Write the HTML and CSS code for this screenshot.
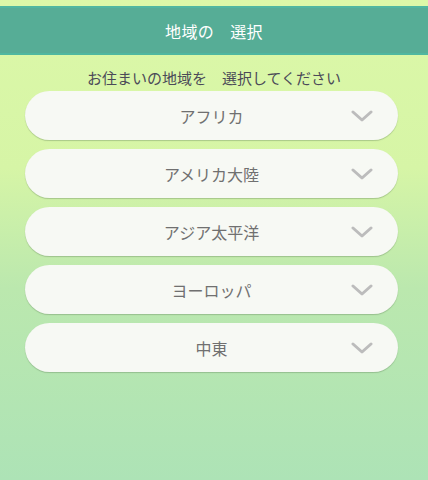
FILE: index.html
```html
<!DOCTYPE html>
<html lang="ja">
<head>
<meta charset="utf-8">
<title>地域の選択</title>
<link rel="stylesheet" href="styles.css">
</head>
<body>
<div class="page">
  <header class="header">地域の　選択</header>
  <p class="subtitle">お住まいの地域を　選択してください</p>
  <ul class="list">
    <li class="item"><span class="label">アフリカ</span><svg class="chev" viewBox="0 0 22 12"><path d="M2 2 L11 10 L20 2"/></svg></li>
    <li class="item"><span class="label">アメリカ大陸</span><svg class="chev" viewBox="0 0 22 12"><path d="M2 2 L11 10 L20 2"/></svg></li>
    <li class="item"><span class="label">アジア太平洋</span><svg class="chev" viewBox="0 0 22 12"><path d="M2 2 L11 10 L20 2"/></svg></li>
    <li class="item"><span class="label">ヨーロッパ</span><svg class="chev" viewBox="0 0 22 12"><path d="M2 2 L11 10 L20 2"/></svg></li>
    <li class="item"><span class="label">中東</span><svg class="chev" viewBox="0 0 22 12"><path d="M2 2 L11 10 L20 2"/></svg></li>
  </ul>
</div>
</body>
</html>
```

FILE: styles.css
```css
html, body {
  margin: 0;
  padding: 0;
}
body {
  width: 428px;
  height: 480px;
  overflow: hidden;
  font-family: "Noto Sans CJK JP", "Noto Sans", sans-serif;
  background: linear-gradient(180deg, #dcf8a8 0%, #d6f5a6 35%, #bbe8ae 60%, #ade3b6 100%);
}
.page {
  display: flex;
  flex-direction: column;
  padding-top: 6px;
}
.header {
  height: 45px;
  border-top: 2px solid #4fb7a0;
  border-bottom: 2px solid #4fb7a0;
  background: #56ad96;
  color: #ffffff;
  font-size: 16px;
  display: flex;
  align-items: center;
  justify-content: center;
  letter-spacing: 0.3px;
}
.subtitle {
  margin: 14px 0 0;
  height: 22px;
  line-height: 18px;
  text-align: center;
  font-size: 15px;
  color: #4b4a58;
}
.list {
  list-style: none;
  margin: 0;
  padding: 0 30px 0 25px;
  display: flex;
  flex-direction: column;
  gap: 9px;
}
.item {
  height: 49px;
  border-radius: 25px;
  background: #f7f9f4;
  box-shadow: 0 1px 1px rgba(90, 120, 80, 0.35);
  display: grid;
  grid-template-columns: 1fr auto 1fr;
  align-items: center;
}
.label {
  grid-column: 2;
  font-size: 16px;
  color: #707070;
}
.chev {
  grid-column: 3;
  justify-self: end;
  margin-right: 25px;
  width: 22px;
  height: 12px;
  fill: none;
  stroke: #bcbcbc;
  stroke-width: 3;
  stroke-linecap: round;
  stroke-linejoin: round;
}
```
